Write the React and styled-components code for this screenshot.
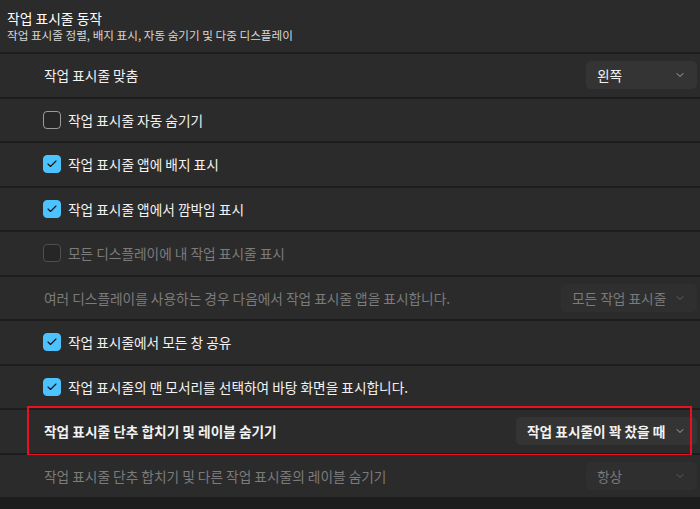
import React from "react";
import styled, { createGlobalStyle } from "styled-components";
import { ChevronDown, Check } from "lucide-react";

const GlobalStyle = createGlobalStyle`
  body {
    margin: 0;
    background: #1f1f1f;
    font-family: "Noto Sans CJK KR", "Noto Sans", sans-serif;
    color: #ffffff;
  }
`;

const Page = styled.div`
  width: 700px;
  height: 509px;
  overflow: hidden;
  display: flex;
  flex-direction: column;
  gap: 2px;
  background: #1d1d1d;
`;

const Header = styled.div`
  height: 52px;
  padding: 0 7px;
  background: #2b2b2b;
  display: flex;
  flex-direction: column;
  justify-content: center;
  gap: 1px;
`;

const Title = styled.div`
  font-size: 13.8px;
  line-height: 17px;
  color: #ffffff;
`;

const Subtitle = styled.div`
  font-size: 11.6px;
  line-height: 14px;
  color: #d6d6d6;
`;

const Row = styled.div`
  position: relative;
  height: 42.5px;
  flex-shrink: 0;
  background: #2b2b2b;
  display: flex;
  align-items: center;
  justify-content: space-between;
  padding: 0 3px 0 ${(p) => (p.$check ? "43px" : "44px")};
`;

const Label = styled.span`
  display: flex;
  align-items: center;
  gap: 7px;
  font-size: 13.7px;
  font-weight: ${(p) => (p.$bold ? 600 : 400)};
  color: ${(p) => (p.$disabled ? "#7b7b7b" : "#f2f2f2")};
`;

const Box = styled.span`
  width: 18px;
  height: 18px;
  box-sizing: border-box;
  border-radius: 4px;
  display: flex;
  align-items: center;
  justify-content: center;
  background: ${(p) => (p.$checked ? "#4cc2ff" : "#262626")};
  border: 1px solid
    ${(p) => (p.$checked ? "#4cc2ff" : p.$disabled ? "#4f4f4f" : "#9b9b9b")};
`;

const Select = styled.div`
  height: 28px;
  width: ${(p) => p.$width}px;
  box-sizing: border-box;
  border-radius: 5px;
  background: ${(p) => (p.$disabled ? "#2f2f2f" : "#343434")};
  display: flex;
  align-items: center;
  justify-content: space-between;
  padding: 0 11px;
  font-size: 13.7px;
  font-weight: ${(p) => (p.$bold ? 600 : 400)};
  color: ${(p) => (p.$disabled ? "#7a7a7a" : "#f2f2f2")};

  svg {
    color: ${(p) => (p.$disabled ? "#6e6e6e" : "#c8c8c8")};
  }
`;

const Highlight = styled.div`
  position: absolute;
  top: -4px;
  bottom: -3px;
  left: 27px;
  right: 8px;
  border: 2px solid #e81123;
  pointer-events: none;
`;

const Checkbox = ({ checked, disabled, children }) => (
  <Label $disabled={disabled}>
    <Box $checked={checked} $disabled={disabled}>
      {checked && <Check size={12} strokeWidth={2.2} color="#101010" />}
    </Box>
    {children}
  </Label>
);

const Dropdown = ({ value, width, disabled, bold }) => (
  <Select $width={width} $disabled={disabled} $bold={bold}>
    {value}
    <ChevronDown size={12} strokeWidth={1.6} />
  </Select>
);

export default function App() {
  return (
    <>
      <GlobalStyle />
      <Page>
        <Header>
          <Title>작업 표시줄 동작</Title>
          <Subtitle>작업 표시줄 정렬, 배지 표시, 자동 숨기기 및 다중 디스플레이</Subtitle>
        </Header>
        <Row>
          <Label>작업 표시줄 맞춤</Label>
          <Dropdown value="왼쪽" width={111} />
        </Row>
        <Row $check>
          <Checkbox>작업 표시줄 자동 숨기기</Checkbox>
        </Row>
        <Row $check>
          <Checkbox checked>작업 표시줄 앱에 배지 표시</Checkbox>
        </Row>
        <Row $check>
          <Checkbox checked>작업 표시줄 앱에서 깜박임 표시</Checkbox>
        </Row>
        <Row $check>
          <Checkbox disabled>모든 디스플레이에 내 작업 표시줄 표시</Checkbox>
        </Row>
        <Row>
          <Label $disabled>여러 디스플레이를 사용하는 경우 다음에서 작업 표시줄 앱을 표시합니다.</Label>
          <Dropdown value="모든 작업 표시줄" width={136} disabled />
        </Row>
        <Row $check>
          <Checkbox checked>작업 표시줄에서 모든 창 공유</Checkbox>
        </Row>
        <Row $check>
          <Checkbox checked>작업 표시줄의 맨 모서리를 선택하여 바탕 화면을 표시합니다.</Checkbox>
        </Row>
        <Row>
          <Label $bold>작업 표시줄 단추 합치기 및 레이블 숨기기</Label>
          <Dropdown value="작업 표시줄이 꽉 찼을 때" width={181} bold />
          <Highlight />
        </Row>
        <Row>
          <Label $disabled>작업 표시줄 단추 합치기 및 다른 작업 표시줄의 레이블 숨기기</Label>
          <Dropdown value="항상" width={111} disabled />
        </Row>
      </Page>
    </>
  );
}
